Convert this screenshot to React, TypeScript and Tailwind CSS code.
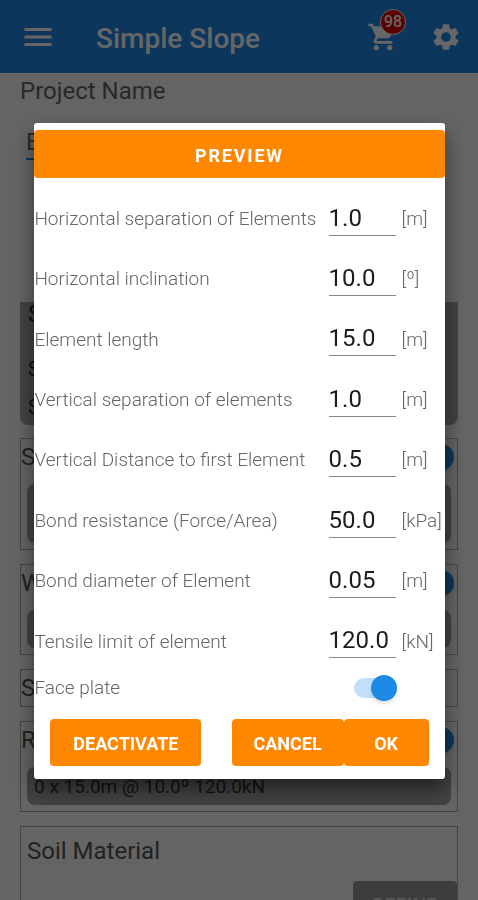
import { useState } from "react";
import { MdMenu, MdSettings, MdShoppingCart } from "react-icons/md";

const fields = [
  { id: "hsep", label: "Horizontal separation of Elements", value: "1.0", unit: "[m]" },
  { id: "hinc", label: "Horizontal inclination", value: "10.0", unit: "[º]" },
  { id: "length", label: "Element length", value: "15.0", unit: "[m]" },
  { id: "vsep", label: "Vertical separation of elements", value: "1.0", unit: "[m]" },
  { id: "vdist", label: "Vertical Distance to first Element", value: "0.5", unit: "[m]" },
  { id: "bond", label: "Bond resistance (Force/Area)", value: "50.0", unit: "[kPa]" },
  { id: "diameter", label: "Bond diameter of Element", value: "0.05", unit: "[m]" },
  { id: "tensile", label: "Tensile limit of element", value: "120.0", unit: "[kN]" },
];

const button = "h-[47px] rounded bg-[#ff8800] pt-0.5 text-lg font-bold text-white";

function Toggle({ id, label }: { id: string; label?: string }) {
  const [on, setOn] = useState(true);
  return (
    <input
      id={id}
      type="checkbox"
      role="switch"
      aria-label={label}
      checked={on}
      onChange={(e) => setOn(e.target.checked)}
      className="flex h-5 w-[43px] appearance-none items-center rounded-full bg-gray-300 before:size-[26px] before:shrink-0 before:rounded-full before:bg-white before:shadow-md checked:justify-end checked:bg-[#c1dff8] checked:before:bg-[#1e88e5]"
    />
  );
}

function Header() {
  return (
    <header className="flex h-[73px] shrink-0 items-center bg-[#1e88e5] pr-4 pl-5 text-white">
      <button aria-label="Menu"><MdMenu className="size-9" /></button>
      <h1 className="ml-10 flex-1 pt-1 text-[28px] font-medium">Simple Slope</h1>
      <button aria-label="Cart" className="relative mr-[31px]">
        <MdShoppingCart className="size-8" />
        <span className="absolute -top-3 -right-[7px] flex size-[26px] items-center justify-center rounded-full border border-white bg-[#e00000] text-base font-medium">98</span>
      </button>
      <button aria-label="Settings"><MdSettings className="size-8" /></button>
    </header>
  );
}

function Section({ id, title, toggle, children }: { id: string; title: string; toggle?: boolean; children?: React.ReactNode }) {
  return (
    <section className="mb-[14px] border border-[#aaa] px-[6px]">
      <div className="-mr-[3px] -ml-[6px] flex h-9 items-center justify-between">
        <h2 className="text-2xl text-[#555]">{title}</h2>
        {toggle && <Toggle id={id} label={id} />}
      </div>
      {children}
    </section>
  );
}

export default function App() {
  return (
    <div className="h-screen overflow-hidden bg-[#fafafa] font-[Roboto,sans-serif]">
      <Header />
      <main className="px-5">
        <label htmlFor="project" className="block h-9 text-2xl leading-9 text-[#666]">Project Name</label>
        <div className="mb-[142px] px-[6px] pt-4">
          <input id="project" defaultValue="E" className="block h-[35px] w-4/5 border-b-2 border-[#1e88e5] text-2xl text-[#666]" />
        </div>
        <section className="mb-[13px] h-[123px] rounded-b-lg bg-[#a6a6a6] px-2 text-[#222]">
          <h2 className="h-12 text-2xl leading-6">S</h2>
          <p className="h-[38px] text-xl leading-[38px]">S</p>
          <p className="h-[38px] text-xl leading-[38px]">S</p>
        </section>
        <Section id="surcharge" title="S" toggle>
          <div className="mt-[9px] mb-[6px] h-[59px] rounded-lg bg-[#a6a6a6]" />
        </Section>
        <Section id="water" title="W" toggle>
          <div className="mt-[9px] mb-[6px] h-[38px] rounded-lg bg-[#a6a6a6]" />
        </Section>
        <Section id="seismic" title="S" />
        <Section id="reinforcement" title="R" toggle>
          <p className="mt-[9px] mb-[6px] h-[38px] rounded-lg bg-[#a6a6a6] px-[7px] text-[19px] leading-10 text-[#333]">0 x 15.0m @ 10.0º 120.0kN</p>
        </Section>
        <section className="border border-[#aaa] pl-[6px]">
          <h2 className="h-[54px] text-2xl leading-[48px] text-[#555]">Soil Material</h2>
          <div className="flex justify-end">
            <button className="h-12 w-26 rounded bg-[#999] text-lg font-medium tracking-wider text-[#ddd]">DEFINE</button>
          </div>
        </section>
      </main>

      <div className="fixed inset-0 flex items-center justify-center bg-black/60 pt-0.5 pl-px">
        <div role="dialog" aria-label="Element settings" className="w-[86%] rounded-[3px] bg-white pt-[7px] pb-[13px] text-[#666] shadow-[0_10px_20px_rgba(0,0,0,0.5)]">
          <button className="h-12 w-full rounded bg-[#ff8800] pt-1 text-lg font-bold tracking-widest text-white">PREVIEW</button>
          <div className="mt-[10px] grid h-[483px] grid-rows-8">
            {fields.map((f) => (
              <div key={f.id} className="flex items-center">
                <label htmlFor={f.id} className="flex-1 pt-0.5 text-[19px] font-light">{f.label}</label>
                <input id={f.id} defaultValue={f.value} className="h-[35px] w-[67px] border-b border-[#888] text-2xl text-[#1c1c1c]" />
                <span className="w-[49px] pt-0.5 pl-[6px] text-[19px] font-light">{f.unit}</span>
              </div>
            ))}
          </div>
          <div className="flex h-[34px] items-center justify-between pr-12">
            <label htmlFor="plate" className="text-[19px] font-light">Face plate</label>
            <Toggle id="plate" />
          </div>
          <div className="mt-[14px] flex px-4">
            <button className={`${button} w-[151px]`}>DEACTIVATE</button>
            <button className={`${button} ml-auto w-28`}>CANCEL</button>
            <button className={`${button} w-[85px]`}>OK</button>
          </div>
        </div>
      </div>
    </div>
  );
}
